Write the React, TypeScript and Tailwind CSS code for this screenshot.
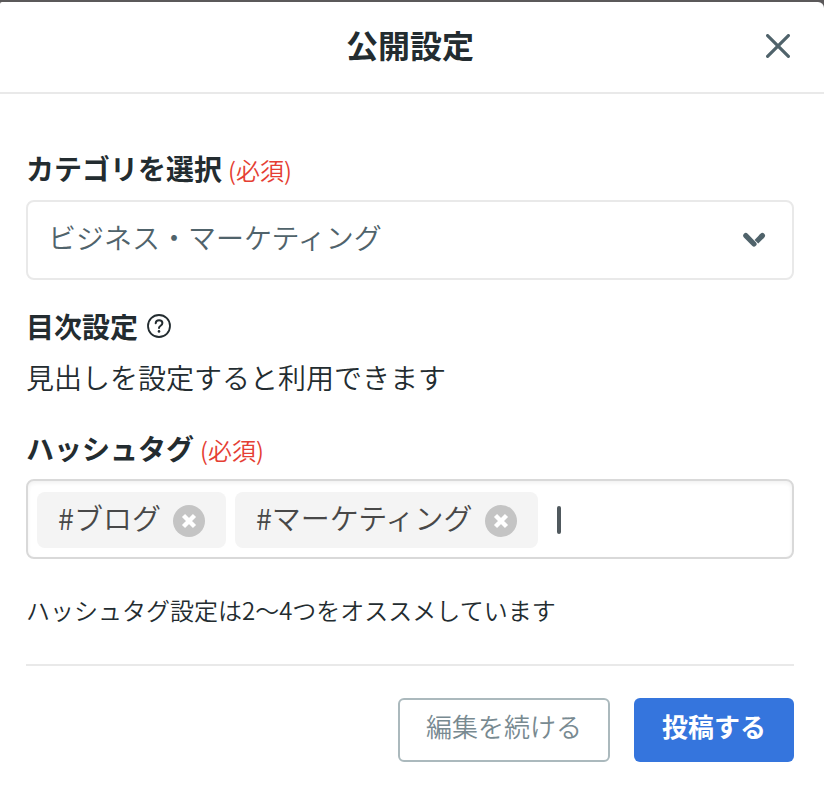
import React, { useState } from 'react';

const CATEGORIES = ['ビジネス・マーケティング', 'ライフスタイル', 'テクノロジー'];

const CloseIcon: React.FC = () => (
  <svg viewBox="0 0 24 24" className="h-6 w-6" fill="none" stroke="currentColor" strokeWidth="3.2" strokeLinecap="round" aria-hidden="true">
    <path d="M1.6 1.6 22.4 22.4M22.4 1.6 1.6 22.4" />
  </svg>
);

const ChevronIcon: React.FC = () => (
  <svg viewBox="0 0 24 16" className="h-4 w-6" fill="none" stroke="currentColor" strokeWidth="5.2" aria-hidden="true">
    <path d="M3.8 3.6 12 12" strokeLinecap="round" />
    <path d="M20.4 3.6 19.5 4.5" strokeLinecap="round" />
    <path d="M20.4 3.6 14.4 9.7" />
  </svg>
);

const HelpIcon: React.FC = () => (
  <svg viewBox="0 0 24 24" className="h-6 w-6" fill="none" stroke="currentColor" strokeWidth="1.8" strokeLinecap="round" aria-hidden="true">
    <circle cx="12" cy="12" r="11" />
    <path d="M8.7 9.3c.1-2 1.5-3.1 3.4-3.1s3.3 1.2 3.3 2.8c0 1.4-.8 2.1-1.8 2.8-1 .7-1.6 1.2-1.6 2.2" strokeWidth="2" />
    <circle cx="12" cy="17.4" r="1.3" fill="currentColor" stroke="none" />
  </svg>
);

const RemoveIcon: React.FC = () => (
  <svg viewBox="0 0 32 32" className="h-8 w-8" aria-hidden="true">
    <circle cx="16" cy="16" r="16" fill="#c4c4c4" />
    <path d="M10.5 10.5 21.5 21.5M21.5 10.5 10.5 21.5" stroke="#fff" strokeWidth="4.4" />
  </svg>
);

const Required: React.FC = () => <span className="text-2xl leading-none font-[350] text-[#e53e33]">(必須)</span>;

interface TagProps {
  name: string;
  onRemove: () => void;
}

const Tag: React.FC<TagProps> = ({ name, onRemove }) => (
  <li className="flex h-14 items-center gap-3 rounded-lg bg-[#f4f4f4] px-[21px] text-[29px] leading-10 font-[350] text-[#484848]">
    <span className="pb-1.5">#{name}</span>
    <button type="button" onClick={onRemove} aria-label={`${name}を削除`} className="mt-0.5 cursor-pointer">
      <RemoveIcon />
    </button>
  </li>
);

const App: React.FC = () => {
  const [category, setCategory] = useState(CATEGORIES[0]);
  const [tags, setTags] = useState(['ブログ', 'マーケティング']);
  const [draft, setDraft] = useState('');

  const removeTag = (name: string) => setTags((prev) => prev.filter((t) => t !== name));

  const handleKeyDown = (e: React.KeyboardEvent<HTMLInputElement>) => {
    const value = draft.trim();
    if (e.key !== 'Enter' || e.nativeEvent.isComposing) return;
    e.preventDefault();
    if (value && !tags.includes(value)) {
      setTags((prev) => [...prev, value]);
    }
    setDraft('');
  };

  return (
    <div className="min-h-screen bg-[#5b595a] pt-0.5 font-['Noto_Sans_CJK_JP',sans-serif] text-[#232c30]">
      <div role="dialog" aria-labelledby="dialog-title" className="flex min-h-[calc(100vh-2px)] flex-col rounded-tl-xs rounded-tr-md bg-white">
        <header className="grid grid-cols-[1fr_auto_1fr] items-center border-b-2 border-[#e9e9e9] pr-[34px] pl-[30px] py-5">
          <h1 id="dialog-title" className="col-start-2 pb-1.5 text-[32px] leading-11 font-bold">
            公開設定
          </h1>
          <button type="button" aria-label="閉じる" className="cursor-pointer justify-self-end pb-0.5 text-[#50636b]">
            <CloseIcon />
          </button>
        </header>

        <form onSubmit={(e) => e.preventDefault()} className="flex flex-col pt-[54px] pr-[30px] pl-[26px]">
          <label htmlFor="category" className="flex items-baseline gap-1.5 text-[28px] leading-10 font-bold">
            カテゴリを選択
            <Required />
          </label>
          <div className="mt-3 grid items-center">
            <select
              id="category"
              value={category}
              onChange={(e) => setCategory(e.target.value)}
              className="col-start-1 row-start-1 h-20 w-full appearance-none rounded-lg border-2 border-[#e9e9e9] bg-white pr-16 pb-1.5 pl-5 text-[28px] font-[350] text-[#50636b]"
            >
              {CATEGORIES.map((c) => (
                <option key={c}>{c}</option>
              ))}
            </select>
            <span className="pointer-events-none col-start-1 row-start-1 mr-7 justify-self-end text-[#50636b]">
              <ChevronIcon />
            </span>
          </div>

          <h2 className="mt-[26px] flex items-center gap-[9px] text-[28px] leading-10 font-bold">
            目次設定
            <button type="button" aria-label="目次設定について" className="cursor-pointer">
              <HelpIcon />
            </button>
          </h2>
          <p className="mt-[11px] text-[28px] leading-10 font-[350]">見出しを設定すると利用できます</p>

          <label htmlFor="hashtag" className="mt-[31px] flex items-baseline gap-1.5 text-[28px] leading-10 font-bold">
            ハッシュタグ
            <Required />
          </label>
          <div className="mt-[11px] flex min-h-20 items-center rounded-lg border-2 border-[#d9d9d9] px-[9px] pt-0.5 shadow-[inset_0_2px_4px_rgba(0,0,0,0.06)]">
            <ul className="flex gap-[9px]">
              {tags.map((tag) => (
                <Tag key={tag} name={tag} onRemove={() => removeTag(tag)} />
              ))}
            </ul>
            <span className="ml-[19px] h-7 w-1 rounded-sm bg-[#50595e]" />
            <input
              id="hashtag"
              type="text"
              value={draft}
              onChange={(e) => setDraft(e.target.value)}
              onKeyDown={handleKeyDown}
              className="h-14 min-w-0 flex-1 bg-transparent text-[28px] font-[350] outline-none"
            />
          </div>
          <p className="mt-[31px] text-2xl leading-10 font-[350]">ハッシュタグ設定は2〜4つをオススメしています</p>

          <div className="mt-[34px] flex justify-end gap-6 border-t-2 border-[#e9e9e9] pt-8 pb-6 text-[26px] leading-10">
            <button type="button" className="h-16 cursor-pointer rounded-md border-2 border-[#abb9bd] px-[26px] pb-2 font-[350] text-[#788a91]">
              編集を続ける
            </button>
            <button type="submit" className="h-16 cursor-pointer rounded-md bg-[#3575dd] px-7 pb-2 font-bold text-white">
              投稿する
            </button>
          </div>
        </form>
      </div>
    </div>
  );
};

export default App;
